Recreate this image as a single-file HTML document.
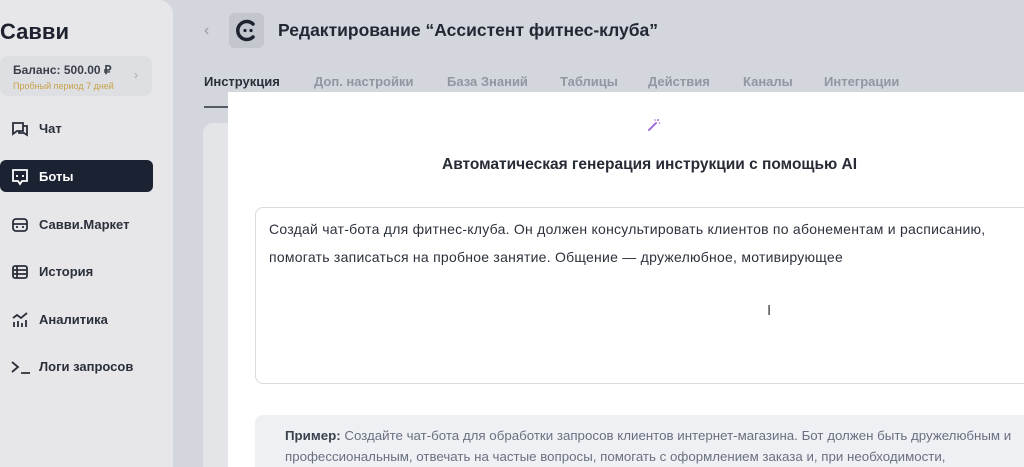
<!DOCTYPE html>
<html style="width:1024px;height:467px;overflow:hidden"><head><meta charset="utf-8"><style>
*{margin:0;padding:0;box-sizing:border-box}
body{width:1024px;height:467px;overflow:hidden;background:#d3d6dc;font-family:"Liberation Sans",sans-serif;position:relative;color:#1f2430}
.sb{position:absolute;left:0;top:0;width:173px;height:467px;background:#e7e7e9;border-radius:0 14px 0 0}
.logo{position:absolute;left:0;top:19px;font-size:22px;font-weight:bold;color:#1e2230}
.bal{position:absolute;left:0;top:56px;width:152px;height:40px;background:#dddfe3;border-radius:8px}
.bal .a{position:absolute;left:13px;top:7px;font-size:12px;color:#3a3f4a;font-weight:bold}
.bal .b{position:absolute;left:13px;top:25px;font-size:9px;color:#c9a24a}
.bal .c{position:absolute;right:14px;top:12px;color:#aaa;font-size:12px}
.it{position:absolute;left:0;width:153px;height:32px;font-size:13px;font-weight:bold;color:#2a2f3a}
.it span{position:absolute;left:39px;top:9px}
.it svg{position:absolute;left:11px;top:8px}
.act{background:#1b2333;color:#fff;border-radius:6px}
.hdr-b{position:absolute;left:204px;top:22px;color:#999;font-size:16px}
.hlogo{position:absolute;left:229px;top:13px;width:35px;height:35px;background:#c3c6cd;border-radius:6px}
.title{position:absolute;left:278px;top:20px;font-size:17.5px;font-weight:bold;color:#222733}
.tab{position:absolute;top:74px;font-size:13px;color:#9096a2;font-weight:bold}
.card{position:absolute;left:203px;top:123px;width:60px;height:344px;background:#e4e5e8;border-radius:10px 0 0 0}
.modal{position:absolute;left:228px;top:92px;width:796px;height:375px;background:#fff}
.ta{position:absolute;left:255px;top:207px;width:790px;height:177px;border:1px solid #d8dadf;border-radius:8px;font-size:14px;letter-spacing:0.25px;color:#2c313c}
.ex{position:absolute;left:255px;top:415px;width:790px;height:52px;background:#eef0f4;border-radius:8px 0 0 0;font-size:13.3px;color:#6a7080;line-height:21px;padding:10px 0 0 30px;white-space:nowrap;overflow:hidden}
</style></head><body>
<div class="sb">
<div class="logo">Савви</div>
<div class="bal"><div class="a">Баланс: 500.00 ₽</div><div class="b">Пробный период 7 дней</div><div class="c">›</div></div>
<div class="it" style="top:112px"><svg width="18" height="18" viewBox="0 0 18 18" fill="none" stroke="#2a2f3a" stroke-width="1.8"><path d="M2 3h10v8H6l-4 3z"/><path d="M12 6h4v9l-3-2H8v-2"/></svg><span>Чат</span></div>
<div class="it act" style="top:160px"><svg width="18" height="18" viewBox="0 0 18 18" fill="none" stroke="#fff" stroke-width="1.8"><path d="M2 2h14v11h-5l-2 3-2-3H2z"/><path d="M6 7v2M12 7v2"/></svg><span>Боты</span></div>
<div class="it" style="top:208px"><svg width="18" height="18" viewBox="0 0 18 18" fill="none" stroke="#2a2f3a" stroke-width="1.8"><rect x="2" y="3" width="14" height="12" rx="3"/><path d="M2 8h14M6 10v2M12 10v2"/></svg><span>Савви.Маркет</span></div>
<div class="it" style="top:255px"><svg width="18" height="18" viewBox="0 0 18 18" fill="none" stroke="#2a2f3a" stroke-width="1.8"><rect x="2" y="3" width="14" height="12" rx="2"/><path d="M2 7h14M2 11h14M6 3v12"/></svg><span>История</span></div>
<div class="it" style="top:303px"><svg width="18" height="18" viewBox="0 0 18 18" fill="none" stroke="#2a2f3a" stroke-width="1.8"><path d="M2 7l4-3 4 3 6-5M3 16v-5M7 16v-6M11 16v-4M15 16v-7"/></svg><span>Аналитика</span></div>
<div class="it" style="top:350px"><svg width="22" height="18" viewBox="0 0 22 18" fill="none" stroke="#2a2f3a" stroke-width="1.8"><path d="M1 4l6 5-6 5M10 15h9"/></svg><span>Логи запросов</span></div>
</div>
<div class="hdr-b">‹</div>
<div class="hlogo"><svg width="35" height="35" viewBox="0 0 35 35"><path d="M24 11a9 9 0 1 0 0 13" fill="none" stroke="#1e2230" stroke-width="3.5" stroke-linecap="round"/><circle cx="16" cy="17.5" r="1.6" fill="#1e2230"/><circle cx="22" cy="17.5" r="1.6" fill="#1e2230"/></svg></div>
<div class="title">Редактирование “Ассистент фитнес-клуба”</div>
<div class="tab" style="left:204px;color:#2a2f3a">Инструкция</div>
<div class="tab" style="left:314px">Доп. настройки</div>
<div class="tab" style="left:447px">База Знаний</div>
<div class="tab" style="left:560px">Таблицы</div>
<div class="tab" style="left:648px">Действия</div>
<div class="tab" style="left:743px">Каналы</div>
<div class="tab" style="left:824px">Интеграции</div>
<div style="position:absolute;left:204px;top:106px;width:24px;height:2px;background:#555a66"></div>
<div class="card"></div>
<div class="modal"></div>
<svg style="position:absolute;left:647px;top:118px" width="14" height="14" viewBox="0 0 14 14"><path d="M2 12l7-7" stroke="#a070d8" stroke-width="2" stroke-linecap="round"/><circle cx="11" cy="2" r="1" fill="#a070d8"/><circle cx="12.5" cy="5" r="0.8" fill="#a070d8"/><circle cx="8" cy="2" r="0.8" fill="#a070d8"/></svg>
<div style="position:absolute;left:442px;top:156px;font-size:15.5px;font-weight:bold;color:#262b36;white-space:nowrap">Автоматическая генерация инструкции с помощью AI</div>
<div class="ta"><div style="position:absolute;left:13px;top:13px;white-space:nowrap">Создай чат-бота для фитнес-клуба. Он должен консультировать клиентов по абонементам и расписанию,</div><div style="position:absolute;left:13px;top:41px;white-space:nowrap">помогать записаться на пробное занятие. Общение — дружелюбное, мотивирующее</div><div style="position:absolute;left:511px;top:94px;font-size:15px;color:#444">I</div></div>
<div class="ex"><b style="color:#3a404c">Пример:</b> Создайте чат-бота для обработки запросов клиентов интернет-магазина. Бот должен быть дружелюбным и<br>профессиональным, отвечать на частые вопросы, помогать с оформлением заказа и, при необходимости,</div>
</body></html>
